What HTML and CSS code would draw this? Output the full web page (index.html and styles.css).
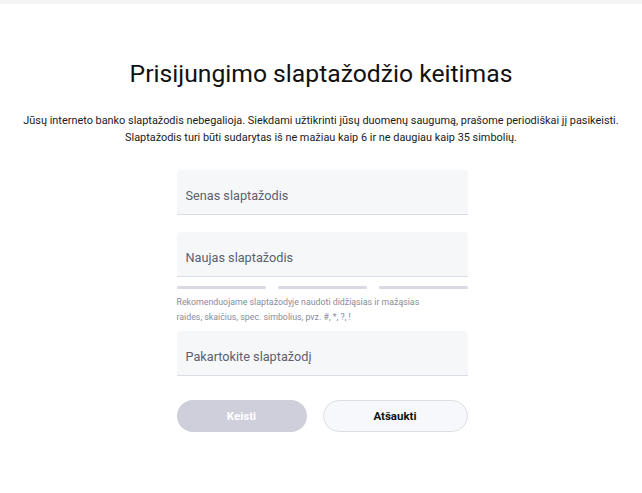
FILE: index.html
```html
<!DOCTYPE html>
<html>
  <head>
    <title>Slaptažodžio keitimas</title>
    <meta charset="UTF-8">
    <meta name="viewport" content="width=device-width, initial-scale=1.0">
    <link rel="stylesheet" href="styles.css">
  </head>
  <body>
    <div class="topbar"></div>
    <div class="page">
      <h1>Prisijungimo slaptažodžio keitimas</h1>
      <p class="intro">
        Jūsų interneto banko slaptažodis nebegalioja. Siekdami užtikrinti jūsų duomenų saugumą, prašome periodiškai jį pasikeisti.<br>
        Slaptažodis turi būti sudarytas iš ne mažiau kaip 6 ir ne daugiau kaip 35 simbolių.
      </p>

      <form class="pwForm">
        <input class="field" type="password" placeholder="Senas slaptažodis">
        <input class="field" type="password" placeholder="Naujas slaptažodis">

        <!--strength meter under new password-->
        <div class="strength">
          <span></span><span></span><span></span>
        </div>
        <div class="hint">Rekomenduojame slaptažodyje naudoti didžiąsias ir mažąsias<br>raides, skaičius, spec. simbolius, pvz. #, *, ?, !</div>

        <input class="field" type="password" placeholder="Pakartokite slaptažodį">

        <div class="buttons">
          <button type="button" class="btn primary" disabled>Keisti</button>
          <button type="button" class="btn secondary">Atšaukti</button>
        </div>
      </form>
    </div>
  </body>
</html>
```

FILE: styles.css
```css
* {
  box-sizing: border-box;
}
body {
  margin: 0;
  font-family: Roboto, "Liberation Sans", Arial, sans-serif;
  background: #fff;
  color: #111;
}
.topbar {
  height: 4px;
  background: #f3f4f6;
}
.page {
  display: flex;
  flex-direction: column;
  align-items: center;
}
h1 {
  font-size: 24.7px;
  font-weight: 400;
  margin: 56px 0 0;
  line-height: 28px;
}
.intro {
  font-size: 10.9px;
  line-height: 17px;
  text-align: center;
  margin: 24px 0 0;
  color: #1a1a1a;
}
.pwForm {
  width: 291px;
  margin: 24px 0 0 2px;
  display: flex;
  flex-direction: column;
}
/* text sits a little below the middle of the field */
.field {
  height: 45px;
  border: none;
  border-bottom: 1px solid #dcdce6;
  border-radius: 4px 4px 0 0;
  background: #f6f7f9;
  padding: 6px 9px 0;
  font-family: inherit;
  font-size: 12.7px;
  color: #333;
  outline: none;
  margin-bottom: 17px;
}
.field::placeholder {
  color: #5c5f6e;
}
.strength {
  display: flex;
  gap: 12px;
  margin-top: -8px;
}
.strength span {
  flex: 1;
  height: 3px;
  border-radius: 2px;
  background: #d9d9e4;
}
.hint {
  font-size: 8.8px;
  line-height: 15px;
  color: #8a8c99;
  margin: 6px 0 6px;
}
.buttons {
  display: flex;
  gap: 16px;
  margin-top: 7px;
}
.btn {
  height: 32px;
  border-radius: 16px;
  font-family: inherit;
  font-size: 11.5px;
  font-weight: 700;
}
.primary {
  width: 130px;
  border: none;
  background: #cfcfdc;
  color: #fff;
}
.secondary {
  flex: 1;
  border: 1px solid #dedfe6;
  background: #f7f8fb;
  color: #111;
  cursor: pointer;
}
```
